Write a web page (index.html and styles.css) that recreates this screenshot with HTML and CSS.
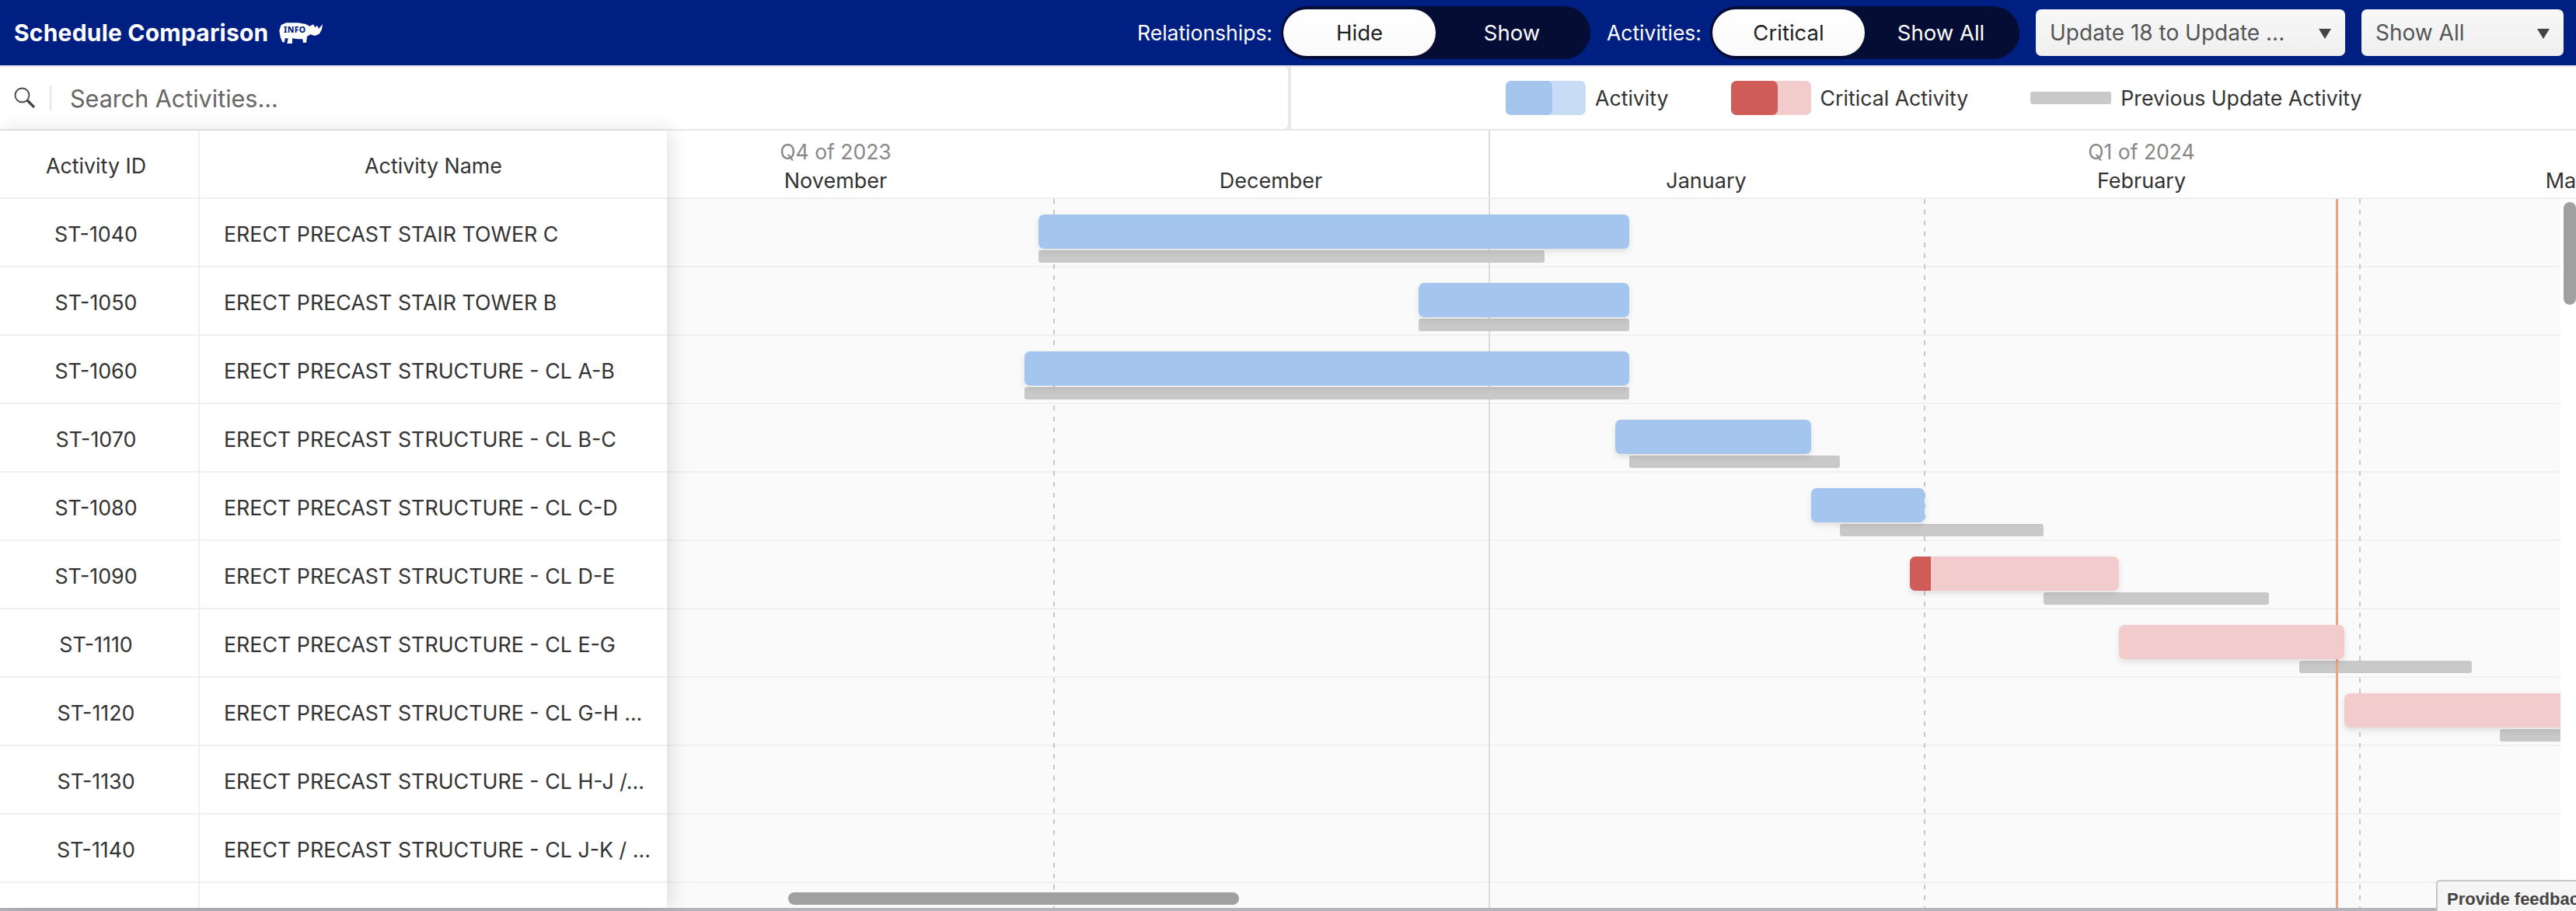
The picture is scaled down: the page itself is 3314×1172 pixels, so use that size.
FILE: index.html
```html
<!DOCTYPE html>
<html lang="en">
<head>
    <meta charset="UTF-8">
    <meta name="viewport" content="width=device-width, initial-scale=1.0">
    <title>Schedule Comparison</title>
    <link rel="stylesheet" href="styles.css">
</head>
<body>
    <header class="topbar">
        <div class="title">Schedule Comparison</div>
        <svg class="rhino" viewBox="0 0 56 28" aria-hidden="true">
            <path fill="#fff" d="M0.3 11.3 L2.7 4 L9.3 1.3 L24.3 1.3 L34.3 3 L39.3 5.7 L44.3 3.3 L46 7 L49.3 5 L51 9 L56 3 L55 9.7 L51.7 15.7 L46 18 L40.3 16.3 L36 19 L35 27 L31 27 L30.3 22.3 L24.3 22.3 L17 21.3 L17 28 L10.3 28 L11.7 21.3 L7.7 21.3 L7 26.3 L4.3 26.3 L1.7 19.7 Z"/>
            <text class="rhino-text" x="6" y="14" textLength="28">INFO</text>
        </svg>
        <div class="controls">
            <span class="ctl-label">Relationships:</span>
            <div class="toggle">
                <span class="toggle-opt active">Hide</span>
                <span class="toggle-opt">Show</span>
            </div>
            <span class="ctl-label label-second">Activities:</span>
            <div class="toggle">
                <span class="toggle-opt active">Critical</span>
                <span class="toggle-opt">Show All</span>
            </div>
            <div class="dropdown dropdown-wide"><span>Update 18 to Update ...</span><i class="caret"></i></div>
            <div class="dropdown dropdown-narrow"><span>Show All</span><i class="caret"></i></div>
        </div>
    </header>

    <div class="toolbar">
        <div class="search">
            <svg class="search-icon" viewBox="0 0 28 28" aria-hidden="true">
                <circle cx="10.5" cy="10.5" r="9" fill="none" stroke="#444" stroke-width="1.8"/>
                <path d="M17 17 L26 26" stroke="#444" stroke-width="3.2" fill="none"/>
            </svg>
            <input class="search-input" type="text" placeholder="Search Activities...">
        </div>
        <div class="legend">
            <div class="legend-item"><span class="swatch swatch-blue"><span></span></span>Activity</div>
            <div class="legend-item"><span class="swatch swatch-red"><span></span></span>Critical Activity</div>
            <div class="legend-item"><span class="swatch-prev"></span>Previous Update Activity</div>
        </div>
    </div>

    <main class="main">
        <section class="table">
            <div class="table-row table-head">
                <div class="cell-id">Activity ID</div>
                <div class="cell-name center">Activity Name</div>
            </div>
            <div class="table-row"><div class="cell-id">ST-1040</div><div class="cell-name">ERECT PRECAST STAIR TOWER C</div></div>
            <div class="table-row"><div class="cell-id">ST-1050</div><div class="cell-name">ERECT PRECAST STAIR TOWER B</div></div>
            <div class="table-row"><div class="cell-id">ST-1060</div><div class="cell-name">ERECT PRECAST STRUCTURE - CL A-B</div></div>
            <div class="table-row"><div class="cell-id">ST-1070</div><div class="cell-name">ERECT PRECAST STRUCTURE - CL B-C</div></div>
            <div class="table-row"><div class="cell-id">ST-1080</div><div class="cell-name">ERECT PRECAST STRUCTURE - CL C-D</div></div>
            <div class="table-row"><div class="cell-id">ST-1090</div><div class="cell-name">ERECT PRECAST STRUCTURE - CL D-E</div></div>
            <div class="table-row"><div class="cell-id">ST-1110</div><div class="cell-name">ERECT PRECAST STRUCTURE - CL E-G</div></div>
            <div class="table-row"><div class="cell-id">ST-1120</div><div class="cell-name">ERECT PRECAST STRUCTURE - CL G-H ...</div></div>
            <div class="table-row"><div class="cell-id">ST-1130</div><div class="cell-name">ERECT PRECAST STRUCTURE - CL H-J /...</div></div>
            <div class="table-row"><div class="cell-id">ST-1140</div><div class="cell-name">ERECT PRECAST STRUCTURE - CL J-K / ...</div></div>
            <div class="table-row"><div class="cell-id"></div><div class="cell-name"></div></div>
        </section>

        <section class="chart">
            <div class="months">
                <div class="month"><span class="quarter">Q4 of 2023</span><span>November</span></div>
                <div class="month"><span class="quarter"></span><span>December</span></div>
                <div class="month month-q"><span class="quarter"></span><span>January</span></div>
                <div class="month"><span class="quarter">Q1 of 2024</span><span>February</span></div>
                <div class="month"><span class="quarter"></span><span>March</span></div>
            </div>
            <div class="rows">
                <i class="gridline" style="left: 497px"></i>
                <i class="gridline" style="left: 1617px"></i>
                <i class="gridline" style="left: 2177px"></i>
                <i class="qline"></i>
                <i class="today"></i>

                <div class="row">
                    <div class="bar blue" style="left: 478px; width: 760px"></div>
                    <div class="prev" style="left: 478px; width: 651px"></div>
                </div>
                <div class="row">
                    <div class="bar blue" style="left: 967px; width: 271px"></div>
                    <div class="prev" style="left: 967px; width: 271px"></div>
                </div>
                <div class="row">
                    <div class="bar blue" style="left: 460px; width: 778px"></div>
                    <div class="prev" style="left: 460px; width: 778px"></div>
                </div>
                <div class="row">
                    <div class="bar blue" style="left: 1220px; width: 252px"></div>
                    <div class="prev" style="left: 1238px; width: 271px"></div>
                </div>
                <div class="row">
                    <div class="bar blue" style="left: 1472px; width: 146px"></div>
                    <div class="prev" style="left: 1509px; width: 262px"></div>
                </div>
                <div class="row">
                    <div class="bar pink" style="left: 1599px; width: 269px"><span class="bar-done" style="width: 27px"></span></div>
                    <div class="prev" style="left: 1771px; width: 290px"></div>
                </div>
                <div class="row">
                    <div class="bar pink" style="left: 1868px; width: 290px"></div>
                    <div class="prev" style="left: 2100px; width: 222px"></div>
                </div>
                <div class="row">
                    <div class="bar pink" style="left: 2158px; width: 400px"></div>
                    <div class="prev" style="left: 2358px; width: 200px"></div>
                </div>
                <div class="row"></div>
                <div class="row"></div>
                <div class="row"></div>
            </div>
            <div class="scroll-v"></div>
            <div class="scroll-h"></div>
        </section>
    </main>

    <div class="feedback">Provide feedback</div>
</body>
</html>
```

FILE: styles.css
```css
html, body {
    margin: 0;
    height: 100%;
    overflow: hidden;
}

body {
    background-color: #e8e8e8;
    font-family: Inter, "Noto Sans", sans-serif;
    color: #333;
    position: relative;
}

/* top bar */
.topbar {
    height: 84px;
    margin-bottom: 2px;
    background-color: #001f82;
    display: flex;
    align-items: center;
    padding: 0 16px 0 18px;
    color: white;
}

.title {
    font-size: 30px;
    font-weight: 700;
    letter-spacing: 0.2px;
}

.rhino {
    width: 56px;
    height: 28px;
    margin-left: 14px;
}

.rhino-text {
    font-family: "Noto Sans", sans-serif;
    font-size: 10.5px;
    font-weight: 800;
    fill: #001f82;
}

.controls {
    margin-left: auto;
    display: flex;
    align-items: center;
}

.ctl-label {
    font-size: 26.5px;
    margin-right: 11px;
}

.label-second {
    margin-left: 21px;
}

.toggle {
    width: 398px;
    height: 68px;
    box-sizing: border-box;
    padding: 4px 3px;
    background-color: #060d35;
    border-radius: 34px;
    display: flex;
}

.toggle-opt {
    flex: 1;
    display: flex;
    align-items: center;
    justify-content: center;
    font-size: 27.5px;
}

.toggle-opt.active {
    background-image: linear-gradient(#fff, #fafafa);
    color: #222;
    border-radius: 30px;
}

.dropdown {
    height: 60px;
    box-sizing: border-box;
    margin-left: 21px;
    padding: 0 18px;
    display: flex;
    align-items: center;
    justify-content: space-between;
    background-image: linear-gradient(#f8f8f8, #efefef);
    border-radius: 7px;
    color: #555;
    font-size: 28px;
}

.dropdown-wide {
    width: 398px;
}

.dropdown-narrow {
    width: 260px;
}

.caret {
    width: 0;
    height: 0;
    border-left: 8px solid transparent;
    border-right: 8px solid transparent;
    border-top: 13px solid #444;
    margin-top: 3px;
}

/* search and legend */
.toolbar {
    height: 80px;
    margin-bottom: 2px;
    display: flex;
    gap: 4px;
}

.search {
    width: 1657px;
    background-color: white;
    border-radius: 0 6px 6px 0;
    display: flex;
    align-items: center;
    padding-left: 18px;
    box-sizing: border-box;
}

.search-icon {
    width: 28px;
    height: 28px;
    margin-right: 18px;
}

.search-input {
    flex: 1;
    height: 32px;
    border: none;
    border-left: 2px solid #e4e4e4;
    outline: none;
    padding: 0 0 0 24px;
    font-family: Inter, "Noto Sans", sans-serif;
    font-size: 30.5px;
    background: transparent;
}

.search-input::placeholder {
    color: #666;
    opacity: 1;
}

.legend {
    flex: 1;
    background-color: white;
    display: flex;
    align-items: center;
    gap: 80px;
    padding-left: 276px;
}

.legend-item {
    display: flex;
    align-items: center;
    gap: 12px;
    font-size: 26.7px;
    color: #333;
}

.swatch {
    width: 103px;
    height: 44px;
    border-radius: 7px;
    display: block;
}

.swatch span {
    display: block;
    width: 60px;
    height: 44px;
    border-radius: 7px;
}

.swatch-blue {
    background-color: #c8dcf5;
}

.swatch-blue span {
    background-color: #a3c5ee;
}

.swatch-red {
    background-color: #f2cccc;
}

.swatch-red span {
    background-color: #d05c5a;
}

.swatch-prev {
    width: 104px;
    height: 16px;
    border-radius: 3px;
    background-color: #c9c9c9;
}

/* main area */
.main {
    height: 1000px;
    display: flex;
    border-bottom: 4px solid #b4b4bc;
}

.table {
    width: 858px;
    flex: none;
    background-color: white;
    box-shadow: 4px 0 24px rgba(0, 0, 0, 0.12);
    position: relative;
    z-index: 5;
    overflow: hidden;
}

.table-row {
    height: 86px;
    border-bottom: 2px solid #efefef;
    display: flex;
    font-size: 26.8px;
    color: #333;
}

.cell-id {
    width: 257px;
    flex: none;
    box-sizing: border-box;
    border-right: 2px solid #efefef;
    padding: 3px 8px 0 0;
    display: flex;
    align-items: center;
    justify-content: center;
}

.cell-name {
    flex: 1;
    display: flex;
    align-items: center;
    padding: 3px 0 0 31px;
    white-space: nowrap;
}

.cell-name.center {
    justify-content: center;
    padding-left: 0;
}

.chart {
    flex: 1;
    min-width: 0;
    position: relative;
    background-color: white;
    overflow: hidden;
}

.months {
    height: 86px;
    margin-left: -63px;
    border-bottom: 2px solid #efefef;
    display: flex;
    background-color: white;
}

.month {
    width: 560px;
    flex: none;
    display: flex;
    flex-direction: column;
    align-items: center;
    font-size: 27px;
    padding-top: 9px;
    box-sizing: border-box;
    line-height: 37px;
}

.quarter {
    color: #888;
    height: 37px;
    font-size: 26.5px;
}

.rows {
    position: relative;
    width: 2436px;
    height: 912px;
    background-color: #fafafa;
    overflow: hidden;
}

.row {
    height: 86px;
    border-bottom: 2px solid #f0f0f0;
}

.gridline {
    position: absolute;
    top: 0;
    bottom: 0;
    width: 2px;
    background-image: repeating-linear-gradient(#c8c8c8 0, #c8c8c8 6px, transparent 6px, transparent 14px);
}

.qline {
    position: absolute;
    left: 1057px;
    top: 0;
    bottom: 0;
    width: 2px;
    background-color: #dcdcdc;
}

.chart::before {
    content: "";
    position: absolute;
    left: 1057px;
    top: 0;
    height: 86px;
    width: 2px;
    background-color: #dcdcdc;
}

.today {
    position: absolute;
    left: 2147px;
    top: 0;
    bottom: 0;
    width: 3px;
    background-color: #f5a27a;
    z-index: 2;
}

.bar {
    position: absolute;
    height: 44px;
    margin-top: 20px;
    border-radius: 7px;
    box-shadow: 0 4px 8px rgba(0, 0, 0, 0.1);
    overflow: hidden;
    z-index: 3;
}

.blue {
    background-color: #a3c5ee;
}

.pink {
    background-color: #f2cccc;
}

.bar-done {
    display: block;
    height: 100%;
    background-color: #d05c5a;
}

.prev {
    position: absolute;
    height: 16px;
    margin-top: 66px;
    border-radius: 3px;
    background-color: #c9c9c9;
    z-index: 1;
}

.scroll-v {
    position: absolute;
    top: 92px;
    right: 0;
    width: 16px;
    height: 132px;
    border-radius: 8px;
    background-color: #a0a0a0;
}

.scroll-h {
    position: absolute;
    left: 156px;
    bottom: 4px;
    width: 580px;
    height: 16px;
    border-radius: 8px;
    background-color: #a0a0a0;
    z-index: 4;
}

.feedback {
    position: absolute;
    right: 0;
    bottom: 0;
    width: 180px;
    height: 40px;
    box-sizing: border-box;
    padding: 10px 0 0 12px;
    border: 2px solid #c8c8c8;
    border-right: none;
    border-bottom: none;
    border-top-left-radius: 5px;
    background-color: #f5f5f5;
    font-family: "Liberation Sans", sans-serif;
    font-weight: 700;
    font-size: 22px;
    line-height: 26px;
    color: #444;
    white-space: nowrap;
    overflow: hidden;
    z-index: 6;
}
```
